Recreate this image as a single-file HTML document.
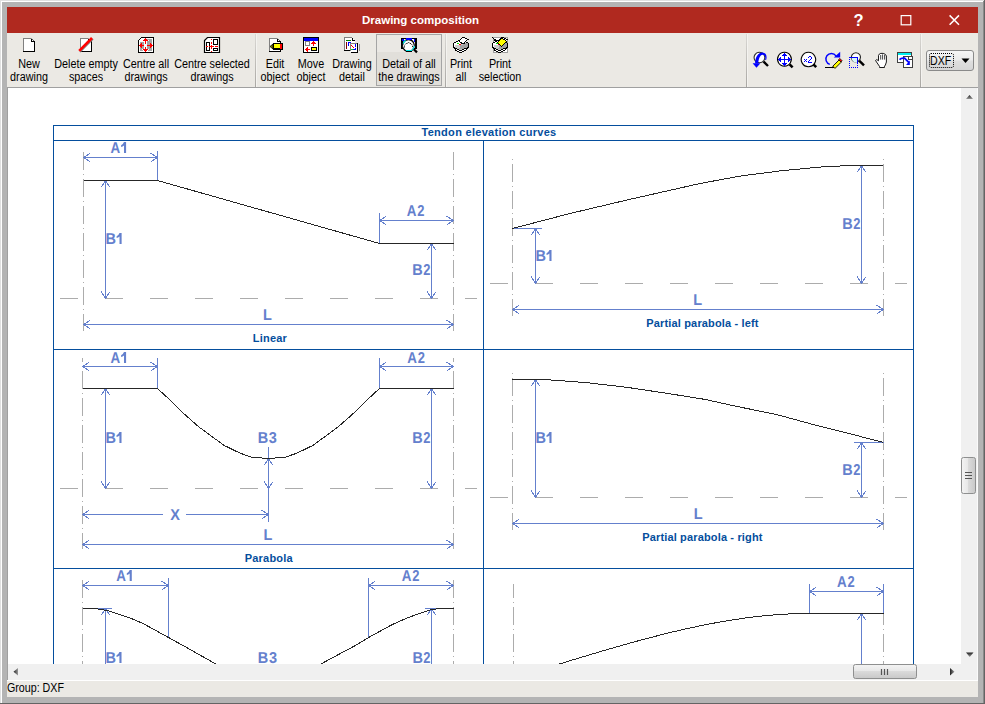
<!DOCTYPE html>
<html><head><meta charset="utf-8">
<style>
*{margin:0;padding:0;box-sizing:border-box}
html,body{width:985px;height:704px;overflow:hidden;background:#b4b4b4;font-family:"Liberation Sans",sans-serif}
.abs{position:absolute}
#frame{position:absolute;left:0;top:0;width:985px;height:704px;background:#b4b4b4}
#title{left:7px;top:7px;width:971px;height:26px;background:#b0291f;color:#fff;font-weight:bold;font-size:11.5px}
#title .t{position:absolute;left:0;width:827px;top:7px;text-align:center}
#toolbar{left:7px;top:33px;width:971px;height:55px;background:#ebe9e4;border-bottom:1px solid #a0a0a0}
.btn{position:absolute;top:0;font-size:11px;letter-spacing:-0.2px;line-height:13px;text-align:center;color:#000}
.btn .lbl{position:absolute;left:0;right:0;top:23px;white-space:nowrap}
.tl{position:absolute;width:120px;text-align:center;font-size:12px;letter-spacing:0px;line-height:13px;white-space:nowrap;color:#000;transform:scaleX(0.9)}
.sep{position:absolute;top:0;width:2px;height:53px;background:linear-gradient(to right,#000 0,#000 1px,#f4f3f0 1px);} .sep::before{content:"";position:absolute;left:0;top:0;width:1px;height:53px;background:linear-gradient(#dad8d4,#a9a7a3)}
#content{left:7px;top:88px;width:954px;height:576px;background:#fff;overflow:hidden}
#vscroll{left:961px;top:88px;width:16px;height:576px;background:#f0f0f0}
#hscroll{left:7px;top:664px;width:954px;height:16px;background:#f0f0f0}
#corner{left:961px;top:664px;width:17px;height:16px;background:#f0f0f0}
#status{left:7px;top:680px;width:971px;height:17px;background:#ebe9e4;border-top:1px solid #fff;font-size:11px}
svg text{font-family:"Liberation Sans",sans-serif}
</style></head><body>
<div id="frame">
 <div class="abs" style="left:0;top:0;width:985px;height:1px;background:#e0e0e0"></div>
 <div class="abs" style="left:0;top:1px;width:984px;height:1px;background:#fff"></div>
 <div class="abs" style="left:0;top:0;width:1px;height:704px;background:#e0e0e0"></div>
 <div class="abs" style="left:1px;top:1px;width:1px;height:702px;background:#fff"></div>
 <div class="abs" style="left:983px;top:1px;width:1px;height:703px;background:#8a8a8a"></div>
 <div class="abs" style="left:984px;top:0;width:1px;height:704px;background:#646464"></div>
 <div class="abs" style="left:0;top:703px;width:985px;height:1px;background:#646464"></div>
</div>
<div id="title" class="abs"><div class="t">Drawing composition</div>
<div class="abs" style="left:846.5px;top:5px;font-size:16.5px;font-weight:bold;line-height:17px">?</div>
<svg class="abs" style="left:893px;top:8px" width="12" height="12"><rect x="1.2" y="0.6" width="9.6" height="9.2" fill="none" stroke="#fff" stroke-width="1.2"/></svg>
<svg class="abs" style="left:941px;top:7px" width="13" height="13"><path d="M1.6 1.4L11 10.8M11 1.4L1.6 10.8" stroke="#fff" stroke-width="1.5"/></svg>
</div>
<div id="toolbar" class="abs"></div>
<div class="abs" style="left:376px;top:34px;width:66px;height:52px;border:1px solid #a5a5a5;background:linear-gradient(#eae8e4 0,#eae8e4 17px,#e1dfda 17px,#e1dfda 100%)"></div>
<div class="sep" style="left:255px;top:34px"></div>
<div class="sep" style="left:445px;top:34px"></div>
<div class="sep" style="left:746px;top:34px"></div>
<div class="sep" style="left:920px;top:34px"></div>
<div class="tl" style="left:-31px;top:58px">New</div><div class="tl" style="left:-31px;top:71px">drawing</div>
<div class="tl" style="left:26px;top:58px">Delete empty</div><div class="tl" style="left:26px;top:71px">spaces</div>
<div class="tl" style="left:85.5px;top:58px">Centre all</div><div class="tl" style="left:85.5px;top:71px">drawings</div>
<div class="tl" style="left:151.5px;top:58px">Centre selected</div><div class="tl" style="left:151.5px;top:71px">drawings</div>
<div class="tl" style="left:215px;top:58px">Edit</div><div class="tl" style="left:215px;top:71px">object</div>
<div class="tl" style="left:251px;top:58px">Move</div><div class="tl" style="left:251px;top:71px">object</div>
<div class="tl" style="left:292px;top:58px">Drawing</div><div class="tl" style="left:292px;top:71px">detail</div>
<div class="tl" style="left:348.5px;top:58px">Detail of all</div><div class="tl" style="left:348.5px;top:71px">the drawings</div>
<div class="tl" style="left:401px;top:58px">Print</div><div class="tl" style="left:401px;top:71px">all</div>
<div class="tl" style="left:439.5px;top:58px">Print</div><div class="tl" style="left:439.5px;top:71px">selection</div>
<svg class="abs" style="left:0;top:0" width="985" height="90" viewBox="0 0 985 90" shape-rendering="crispEdges">
<path d="M24 39H31L34 42V51H24Z" fill="#fff" stroke="none" stroke-width="1" />
<rect x="23" y="38" width="1" height="14" fill="#808080"/>
<rect x="23" y="38" width="8" height="1" fill="#808080"/>
<path d="M31.5 38.5L34.5 41.5" fill="none" stroke="#606060" stroke-width="1" shape-rendering="geometricPrecision"/>
<rect x="34" y="41" width="1" height="11" fill="#000"/>
<rect x="23" y="51" width="12" height="1" fill="#000"/>
<rect x="31" y="39" width="1" height="3" fill="#000"/>
<rect x="31" y="41" width="3" height="1" fill="#000"/>
<path d="M81 39H88L91 42V51H81Z" fill="#fff" stroke="none" stroke-width="1" />
<rect x="80" y="38" width="1" height="14" fill="#808080"/>
<rect x="80" y="38" width="8" height="1" fill="#808080"/>
<path d="M88.5 38.5L91.5 41.5" fill="none" stroke="#606060" stroke-width="1" shape-rendering="geometricPrecision"/>
<rect x="91" y="41" width="1" height="11" fill="#000"/>
<rect x="80" y="51" width="12" height="1" fill="#000"/>
<rect x="88" y="39" width="1" height="3" fill="#000"/>
<rect x="88" y="41" width="3" height="1" fill="#000"/>
<path d="M80 52L93 39" fill="none" stroke="#808080" stroke-width="1.6" shape-rendering="geometricPrecision"/>
<path d="M79.2 50.8L92 38" fill="none" stroke="#ff0000" stroke-width="2.6" shape-rendering="geometricPrecision"/>
<rect x="141" y="37" width="13" height="1" fill="#000"/>
<rect x="140" y="38" width="1" height="1" fill="#000"/>
<rect x="141" y="38" width="4" height="1" fill="#fff"/>
<rect x="145" y="38" width="1" height="1" fill="#ff0000"/>
<rect x="146" y="38" width="7" height="1" fill="#fff"/>
<rect x="153" y="38" width="1" height="1" fill="#000"/>
<rect x="139" y="39" width="1" height="1" fill="#000"/>
<rect x="140" y="39" width="4" height="1" fill="#fff"/>
<rect x="144" y="39" width="3" height="1" fill="#ff0000"/>
<rect x="147" y="39" width="5" height="1" fill="#a4a4a4"/>
<rect x="152" y="39" width="1" height="1" fill="#fff"/>
<rect x="153" y="39" width="1" height="1" fill="#000"/>
<rect x="138" y="40" width="1" height="1" fill="#000"/>
<rect x="139" y="40" width="4" height="1" fill="#fff"/>
<rect x="143" y="40" width="5" height="1" fill="#ff0000"/>
<rect x="148" y="40" width="1" height="1" fill="#fff"/>
<rect x="149" y="40" width="3" height="1" fill="#a4a4a4"/>
<rect x="152" y="40" width="1" height="1" fill="#fff"/>
<rect x="153" y="40" width="1" height="1" fill="#000"/>
<rect x="138" y="41" width="1" height="1" fill="#000"/>
<rect x="139" y="41" width="6" height="1" fill="#fff"/>
<rect x="145" y="41" width="1" height="1" fill="#ff0000"/>
<rect x="146" y="41" width="1" height="1" fill="#fff"/>
<rect x="147" y="41" width="5" height="1" fill="#a4a4a4"/>
<rect x="152" y="41" width="1" height="1" fill="#fff"/>
<rect x="153" y="41" width="1" height="1" fill="#000"/>
<rect x="138" y="42" width="1" height="1" fill="#000"/>
<rect x="139" y="42" width="1" height="1" fill="#fff"/>
<rect x="140" y="42" width="4" height="1" fill="#a4a4a4"/>
<rect x="144" y="42" width="1" height="1" fill="#fff"/>
<rect x="145" y="42" width="1" height="1" fill="#ff0000"/>
<rect x="146" y="42" width="1" height="1" fill="#fff"/>
<rect x="147" y="42" width="5" height="1" fill="#a4a4a4"/>
<rect x="152" y="42" width="1" height="1" fill="#fff"/>
<rect x="153" y="42" width="1" height="1" fill="#000"/>
<rect x="138" y="43" width="1" height="1" fill="#000"/>
<rect x="139" y="43" width="1" height="1" fill="#fff"/>
<rect x="140" y="43" width="1" height="1" fill="#a4a4a4"/>
<rect x="141" y="43" width="1" height="1" fill="#ff0000"/>
<rect x="142" y="43" width="2" height="1" fill="#a4a4a4"/>
<rect x="144" y="43" width="1" height="1" fill="#fff"/>
<rect x="145" y="43" width="1" height="1" fill="#ff0000"/>
<rect x="146" y="43" width="1" height="1" fill="#fff"/>
<rect x="147" y="43" width="3" height="1" fill="#a4a4a4"/>
<rect x="150" y="43" width="1" height="1" fill="#ff0000"/>
<rect x="151" y="43" width="1" height="1" fill="#a4a4a4"/>
<rect x="152" y="43" width="1" height="1" fill="#fff"/>
<rect x="153" y="43" width="1" height="1" fill="#000"/>
<rect x="138" y="44" width="1" height="1" fill="#000"/>
<rect x="139" y="44" width="1" height="1" fill="#fff"/>
<rect x="140" y="44" width="2" height="1" fill="#ff0000"/>
<rect x="142" y="44" width="2" height="1" fill="#a4a4a4"/>
<rect x="144" y="44" width="3" height="1" fill="#fff"/>
<rect x="147" y="44" width="3" height="1" fill="#a4a4a4"/>
<rect x="150" y="44" width="2" height="1" fill="#ff0000"/>
<rect x="152" y="44" width="1" height="1" fill="#fff"/>
<rect x="153" y="44" width="1" height="1" fill="#000"/>
<rect x="138" y="45" width="1" height="1" fill="#000"/>
<rect x="139" y="45" width="5" height="1" fill="#ff0000"/>
<rect x="144" y="45" width="3" height="1" fill="#fff"/>
<rect x="147" y="45" width="6" height="1" fill="#ff0000"/>
<rect x="153" y="45" width="1" height="1" fill="#000"/>
<rect x="138" y="46" width="1" height="1" fill="#000"/>
<rect x="139" y="46" width="1" height="1" fill="#fff"/>
<rect x="140" y="46" width="2" height="1" fill="#ff0000"/>
<rect x="142" y="46" width="2" height="1" fill="#a4a4a4"/>
<rect x="144" y="46" width="3" height="1" fill="#fff"/>
<rect x="147" y="46" width="3" height="1" fill="#a4a4a4"/>
<rect x="150" y="46" width="2" height="1" fill="#ff0000"/>
<rect x="152" y="46" width="1" height="1" fill="#fff"/>
<rect x="153" y="46" width="1" height="1" fill="#000"/>
<rect x="138" y="47" width="1" height="1" fill="#000"/>
<rect x="139" y="47" width="1" height="1" fill="#fff"/>
<rect x="140" y="47" width="1" height="1" fill="#a4a4a4"/>
<rect x="141" y="47" width="1" height="1" fill="#ff0000"/>
<rect x="142" y="47" width="2" height="1" fill="#a4a4a4"/>
<rect x="144" y="47" width="1" height="1" fill="#fff"/>
<rect x="145" y="47" width="1" height="1" fill="#ff0000"/>
<rect x="146" y="47" width="1" height="1" fill="#fff"/>
<rect x="147" y="47" width="3" height="1" fill="#a4a4a4"/>
<rect x="150" y="47" width="1" height="1" fill="#ff0000"/>
<rect x="151" y="47" width="1" height="1" fill="#a4a4a4"/>
<rect x="152" y="47" width="1" height="1" fill="#fff"/>
<rect x="153" y="47" width="1" height="1" fill="#000"/>
<rect x="138" y="48" width="1" height="1" fill="#000"/>
<rect x="139" y="48" width="1" height="1" fill="#fff"/>
<rect x="140" y="48" width="4" height="1" fill="#a4a4a4"/>
<rect x="144" y="48" width="1" height="1" fill="#fff"/>
<rect x="145" y="48" width="1" height="1" fill="#ff0000"/>
<rect x="146" y="48" width="1" height="1" fill="#fff"/>
<rect x="147" y="48" width="5" height="1" fill="#a4a4a4"/>
<rect x="152" y="48" width="1" height="1" fill="#fff"/>
<rect x="153" y="48" width="1" height="1" fill="#000"/>
<rect x="138" y="49" width="1" height="1" fill="#000"/>
<rect x="139" y="49" width="1" height="1" fill="#fff"/>
<rect x="140" y="49" width="2" height="1" fill="#a4a4a4"/>
<rect x="142" y="49" width="1" height="1" fill="#fff"/>
<rect x="143" y="49" width="5" height="1" fill="#ff0000"/>
<rect x="148" y="49" width="1" height="1" fill="#fff"/>
<rect x="149" y="49" width="3" height="1" fill="#a4a4a4"/>
<rect x="152" y="49" width="1" height="1" fill="#fff"/>
<rect x="153" y="49" width="1" height="1" fill="#000"/>
<rect x="138" y="50" width="1" height="1" fill="#000"/>
<rect x="139" y="50" width="1" height="1" fill="#fff"/>
<rect x="140" y="50" width="3" height="1" fill="#a4a4a4"/>
<rect x="143" y="50" width="1" height="1" fill="#fff"/>
<rect x="144" y="50" width="3" height="1" fill="#ff0000"/>
<rect x="147" y="50" width="1" height="1" fill="#fff"/>
<rect x="148" y="50" width="4" height="1" fill="#a4a4a4"/>
<rect x="152" y="50" width="1" height="1" fill="#fff"/>
<rect x="153" y="50" width="1" height="1" fill="#000"/>
<rect x="138" y="51" width="1" height="1" fill="#000"/>
<rect x="139" y="51" width="6" height="1" fill="#fff"/>
<rect x="145" y="51" width="1" height="1" fill="#ff0000"/>
<rect x="146" y="51" width="7" height="1" fill="#fff"/>
<rect x="153" y="51" width="1" height="1" fill="#000"/>
<rect x="138" y="52" width="16" height="1" fill="#000"/>
<path d="M204.5 40.5L207.5 37.5H219.5V52.5H204.5Z" fill="#fff" stroke="#000" stroke-width="1.2" shape-rendering="geometricPrecision"/>
<rect x="206" y="42" width="4" height="1" fill="#000"/>
<rect x="206" y="50" width="4" height="1" fill="#000"/>
<rect x="206" y="42" width="1" height="9" fill="#000"/>
<rect x="209" y="42" width="1" height="9" fill="#000"/>
<rect x="213" y="39" width="5" height="1" fill="#000"/>
<rect x="213" y="44" width="5" height="1" fill="#000"/>
<rect x="213" y="39" width="1" height="6" fill="#000"/>
<rect x="217" y="39" width="1" height="6" fill="#000"/>
<rect x="213" y="48" width="5" height="1" fill="#000"/>
<rect x="213" y="50" width="5" height="1" fill="#000"/>
<rect x="213" y="48" width="1" height="3" fill="#000"/>
<rect x="217" y="48" width="1" height="3" fill="#000"/>
<rect x="211" y="39" width="1" height="1" fill="#ff0000"/>
<rect x="211" y="42" width="1" height="1" fill="#ff0000"/>
<rect x="211" y="43" width="1" height="1" fill="#ff0000"/>
<rect x="211" y="45" width="1" height="1" fill="#ff0000"/>
<rect x="211" y="46" width="1" height="1" fill="#ff0000"/>
<rect x="211" y="47" width="1" height="1" fill="#ff0000"/>
<rect x="211" y="48" width="1" height="1" fill="#ff0000"/>
<rect x="211" y="51" width="1" height="1" fill="#ff0000"/>
<rect x="211" y="45" width="1" height="4" fill="#ff0000"/>
<rect x="206" y="46" width="2" height="1" fill="#ff0000"/>
<rect x="209" y="46" width="5" height="1" fill="#ff0000"/>
<rect x="215" y="46" width="3" height="1" fill="#ff0000"/>
<path d="M270 39H277L280 42V51H270Z" fill="#fff" stroke="none" stroke-width="1" />
<rect x="269" y="38" width="1" height="14" fill="#808080"/>
<rect x="269" y="38" width="8" height="1" fill="#808080"/>
<rect x="277" y="39" width="1" height="3" fill="#000"/>
<rect x="277" y="41" width="3" height="1" fill="#000"/>
<path d="M277.5 38.5L280.5 41.5" fill="none" stroke="#606060" stroke-width="1" shape-rendering="geometricPrecision"/>
<rect x="280" y="41" width="1" height="3" fill="#000"/>
<rect x="269" y="51" width="12" height="1" fill="#000"/>
<rect x="280" y="49" width="1" height="3" fill="#000"/>
<rect x="273" y="43" width="10" height="1" fill="#000"/>
<rect x="273" y="49" width="10" height="1" fill="#000"/>
<rect x="273" y="43" width="1" height="7" fill="#000"/>
<rect x="282" y="43" width="1" height="7" fill="#000"/>
<rect x="274" y="44" width="6" height="4" fill="#ffff00"/>
<rect x="280" y="44" width="2" height="5" fill="#ff0000"/>
<rect x="274" y="48" width="6" height="1" fill="#000"/>
<path d="M273 44L270 46.5L273 49Z" fill="#808000" stroke="#000" stroke-width="0.8" shape-rendering="geometricPrecision"/>
<rect x="303" y="37" width="16" height="1" fill="#000"/>
<rect x="303" y="52" width="16" height="1" fill="#000"/>
<rect x="303" y="37" width="1" height="16" fill="#000"/>
<rect x="318" y="37" width="1" height="16" fill="#000"/>
<rect x="304" y="38" width="14" height="3" fill="#0000ff"/>
<rect x="304" y="41" width="14" height="11" fill="#fff"/>
<rect x="305" y="41" width="5" height="1" fill="#808080"/>
<rect x="305" y="45" width="5" height="1" fill="#808080"/>
<rect x="305" y="41" width="1" height="5" fill="#808080"/>
<rect x="309" y="41" width="1" height="5" fill="#808080"/>
<rect x="313" y="41" width="1" height="5" fill="#ff0000"/>
<rect x="311" y="43" width="5" height="1" fill="#ff0000"/>
<rect x="312" y="42" width="3" height="1" fill="#ff0000"/>
<rect x="305" y="49" width="5" height="1" fill="#ff0000"/>
<rect x="307" y="47" width="1" height="5" fill="#ff0000"/>
<rect x="306" y="48" width="1" height="3" fill="#ff0000"/>
<rect x="311" y="47" width="6" height="4" fill="#000"/>
<rect x="312" y="48" width="4" height="2" fill="#ffff00"/>
<path d="M345 38H352L355 41V51H345Z" fill="#fff" stroke="none" stroke-width="1" />
<rect x="344" y="37" width="1" height="14" fill="#808080"/>
<rect x="344" y="37" width="8" height="1" fill="#808080"/>
<rect x="344" y="50" width="8" height="1" fill="#000"/>
<rect x="352" y="38" width="1" height="3" fill="#000"/>
<rect x="352" y="40" width="3" height="1" fill="#000"/>
<rect x="346" y="40" width="5" height="1" fill="#008000"/>
<rect x="346" y="42" width="1" height="7" fill="#800000"/>
<rect x="348" y="42" width="3" height="1" fill="#0000ff"/>
<rect x="348" y="42" width="1" height="4" fill="#0000ff"/>
<rect x="350" y="43" width="8" height="9" fill="#fff"/>
<rect x="357" y="43" width="1" height="10" fill="#000"/>
<rect x="351" y="52" width="7" height="1" fill="#000"/>
<rect x="350" y="43" width="7" height="1" fill="#808080"/>
<rect x="350" y="44" width="1" height="7" fill="#808080"/>
<rect x="359" y="44" width="1" height="7" fill="#909090"/>
<rect x="351" y="45" width="1" height="1" fill="#ff0000"/>
<rect x="352" y="46" width="1" height="1" fill="#ff0000"/>
<rect x="353" y="47" width="1" height="1" fill="#ff0000"/>
<rect x="355" y="44" width="1" height="3" fill="#0000ff"/>
<rect x="353" y="49" width="3" height="1" fill="#0000ff"/>
<rect x="355" y="48" width="1" height="2" fill="#0000ff"/>
<rect x="351" y="49" width="2" height="1" fill="#00e000"/>
<rect x="401" y="38" width="16" height="1" fill="#000"/>
<rect x="401" y="48" width="16" height="1" fill="#000"/>
<rect x="401" y="38" width="1" height="11" fill="#000"/>
<rect x="416" y="38" width="1" height="11" fill="#000"/>
<rect x="402" y="38" width="1" height="11" fill="#000"/>
<rect x="415" y="38" width="1" height="11" fill="#000"/>
<rect x="403" y="39" width="12" height="9" fill="#fff"/>
<rect x="402" y="39" width="2" height="2" fill="#0000ff"/>
<rect x="414" y="39" width="1" height="3" fill="#0000ff"/>
<path d="M408.5 39.6A5.9 5.9 0 1 1 408.4 39.6Z" fill="#fff" stroke="#000" stroke-width="1.2" shape-rendering="geometricPrecision"/>
<rect x="406" y="38" width="6" height="2" fill="#0000ff"/>
<path d="M403.2 43.6A5.9 5.9 0 0 1 405.6 40.4" fill="none" stroke="#00e8e8" stroke-width="1.3" shape-rendering="geometricPrecision"/>
<path d="M414.3 46A5.9 5.9 0 0 1 412.2 49.9" fill="none" stroke="#00e8e8" stroke-width="1.3" shape-rendering="geometricPrecision"/>
<rect x="406" y="50" width="6" height="1" fill="#00e8e8"/>
<rect x="406" y="51" width="6" height="1" fill="#000"/>
<path d="M404.5 47.5V45.5L406 43.5H407.5L408.5 42L409.5 43.5H411L412.5 45.5V47.5" fill="none" stroke="#000" stroke-width="0.9" stroke-dasharray="1.2 0.8" shape-rendering="geometricPrecision"/>
<path d="M413.8 49.2L417 52.4" fill="none" stroke="#000" stroke-width="2.2" shape-rendering="geometricPrecision"/>
<rect x="462" y="37" width="3" height="1" fill="#000"/>
<rect x="461" y="38" width="1" height="1" fill="#000"/>
<rect x="462" y="38" width="3" height="1" fill="#fff"/>
<rect x="465" y="38" width="2" height="1" fill="#000"/>
<rect x="460" y="39" width="1" height="1" fill="#000"/>
<rect x="461" y="39" width="6" height="1" fill="#fff"/>
<rect x="467" y="39" width="2" height="1" fill="#000"/>
<rect x="458" y="40" width="2" height="1" fill="#000"/>
<rect x="460" y="40" width="6" height="1" fill="#fff"/>
<rect x="466" y="40" width="1" height="1" fill="#000"/>
<rect x="456" y="41" width="2" height="1" fill="#000"/>
<rect x="458" y="41" width="1" height="1" fill="#fff"/>
<rect x="459" y="41" width="1" height="1" fill="#000"/>
<rect x="460" y="41" width="5" height="1" fill="#fff"/>
<rect x="465" y="41" width="1" height="1" fill="#000"/>
<rect x="454" y="42" width="2" height="1" fill="#000"/>
<rect x="456" y="42" width="4" height="1" fill="#fff"/>
<rect x="460" y="42" width="2" height="1" fill="#000"/>
<rect x="462" y="42" width="2" height="1" fill="#fff"/>
<rect x="464" y="42" width="1" height="1" fill="#000"/>
<rect x="466" y="42" width="2" height="1" fill="#000"/>
<rect x="453" y="43" width="1" height="1" fill="#000"/>
<rect x="454" y="43" width="3" height="1" fill="#fff"/>
<rect x="457" y="43" width="2" height="1" fill="#00e000"/>
<rect x="459" y="43" width="2" height="1" fill="#fff"/>
<rect x="461" y="43" width="4" height="1" fill="#000"/>
<rect x="465" y="43" width="3" height="1" fill="#a0a0a0"/>
<rect x="468" y="43" width="1" height="1" fill="#000"/>
<rect x="453" y="44" width="1" height="1" fill="#000"/>
<rect x="454" y="44" width="5" height="1" fill="#fff"/>
<rect x="459" y="44" width="2" height="1" fill="#ff0000"/>
<rect x="461" y="44" width="2" height="1" fill="#cccccc"/>
<rect x="463" y="44" width="5" height="1" fill="#a0a0a0"/>
<rect x="468" y="44" width="1" height="1" fill="#000"/>
<rect x="453" y="45" width="1" height="1" fill="#000"/>
<rect x="454" y="45" width="1" height="1" fill="#fff"/>
<rect x="455" y="45" width="5" height="1" fill="#cccccc"/>
<rect x="460" y="45" width="8" height="1" fill="#a0a0a0"/>
<rect x="468" y="45" width="1" height="1" fill="#000"/>
<rect x="453" y="46" width="1" height="1" fill="#000"/>
<rect x="454" y="46" width="1" height="1" fill="#fff"/>
<rect x="455" y="46" width="5" height="1" fill="#cccccc"/>
<rect x="460" y="46" width="8" height="1" fill="#a0a0a0"/>
<rect x="468" y="46" width="1" height="1" fill="#000"/>
<rect x="453" y="47" width="2" height="1" fill="#000"/>
<rect x="455" y="47" width="5" height="1" fill="#cccccc"/>
<rect x="460" y="47" width="7" height="1" fill="#a0a0a0"/>
<rect x="467" y="47" width="2" height="1" fill="#000"/>
<rect x="454" y="48" width="3" height="1" fill="#000"/>
<rect x="457" y="48" width="2" height="1" fill="#cccccc"/>
<rect x="459" y="48" width="5" height="1" fill="#a0a0a0"/>
<rect x="464" y="48" width="4" height="1" fill="#000"/>
<rect x="455" y="49" width="1" height="1" fill="#000"/>
<rect x="456" y="49" width="1" height="1" fill="#fff"/>
<rect x="457" y="49" width="2" height="1" fill="#000"/>
<rect x="459" y="49" width="3" height="1" fill="#cccccc"/>
<rect x="462" y="49" width="2" height="1" fill="#000"/>
<rect x="464" y="49" width="2" height="1" fill="#fff"/>
<rect x="466" y="49" width="1" height="1" fill="#000"/>
<rect x="455" y="50" width="2" height="1" fill="#000"/>
<rect x="457" y="50" width="2" height="1" fill="#fff"/>
<rect x="459" y="50" width="3" height="1" fill="#000"/>
<rect x="462" y="50" width="2" height="1" fill="#fff"/>
<rect x="464" y="50" width="2" height="1" fill="#000"/>
<rect x="457" y="51" width="2" height="1" fill="#000"/>
<rect x="459" y="51" width="3" height="1" fill="#fff"/>
<rect x="462" y="51" width="2" height="1" fill="#000"/>
<rect x="459" y="52" width="3" height="1" fill="#000"/>
<rect x="493" y="37" width="15" height="16" fill="#fff"/>
<rect x="493" y="37" width="15" height="1" fill="#a0a0a0"/>
<rect x="493" y="52" width="15" height="1" fill="#a0a0a0"/>
<rect x="493" y="37" width="1" height="16" fill="#a0a0a0"/>
<rect x="507" y="37" width="1" height="16" fill="#a0a0a0"/>
<rect x="501" y="37" width="3" height="1" fill="#000"/>
<rect x="500" y="38" width="1" height="1" fill="#000"/>
<rect x="501" y="38" width="3" height="1" fill="#fff"/>
<rect x="504" y="38" width="2" height="1" fill="#000"/>
<rect x="499" y="39" width="1" height="1" fill="#000"/>
<rect x="500" y="39" width="6" height="1" fill="#fff"/>
<rect x="506" y="39" width="2" height="1" fill="#000"/>
<rect x="497" y="40" width="2" height="1" fill="#000"/>
<rect x="499" y="40" width="6" height="1" fill="#fff"/>
<rect x="505" y="40" width="1" height="1" fill="#000"/>
<rect x="495" y="41" width="2" height="1" fill="#000"/>
<rect x="497" y="41" width="1" height="1" fill="#fff"/>
<rect x="498" y="41" width="1" height="1" fill="#000"/>
<rect x="499" y="41" width="5" height="1" fill="#fff"/>
<rect x="504" y="41" width="1" height="1" fill="#000"/>
<rect x="493" y="42" width="2" height="1" fill="#000"/>
<rect x="495" y="42" width="4" height="1" fill="#fff"/>
<rect x="499" y="42" width="2" height="1" fill="#000"/>
<rect x="501" y="42" width="2" height="1" fill="#fff"/>
<rect x="503" y="42" width="1" height="1" fill="#000"/>
<rect x="505" y="42" width="2" height="1" fill="#000"/>
<rect x="492" y="43" width="1" height="1" fill="#000"/>
<rect x="493" y="43" width="3" height="1" fill="#fff"/>
<rect x="496" y="43" width="2" height="1" fill="#00e000"/>
<rect x="498" y="43" width="2" height="1" fill="#fff"/>
<rect x="500" y="43" width="4" height="1" fill="#000"/>
<rect x="504" y="43" width="3" height="1" fill="#a0a0a0"/>
<rect x="507" y="43" width="1" height="1" fill="#000"/>
<rect x="492" y="44" width="1" height="1" fill="#000"/>
<rect x="493" y="44" width="5" height="1" fill="#fff"/>
<rect x="498" y="44" width="2" height="1" fill="#ff0000"/>
<rect x="500" y="44" width="2" height="1" fill="#cccccc"/>
<rect x="502" y="44" width="5" height="1" fill="#a0a0a0"/>
<rect x="507" y="44" width="1" height="1" fill="#000"/>
<rect x="492" y="45" width="1" height="1" fill="#000"/>
<rect x="493" y="45" width="1" height="1" fill="#fff"/>
<rect x="494" y="45" width="5" height="1" fill="#cccccc"/>
<rect x="499" y="45" width="8" height="1" fill="#a0a0a0"/>
<rect x="507" y="45" width="1" height="1" fill="#000"/>
<rect x="492" y="46" width="1" height="1" fill="#000"/>
<rect x="493" y="46" width="1" height="1" fill="#fff"/>
<rect x="494" y="46" width="5" height="1" fill="#cccccc"/>
<rect x="499" y="46" width="8" height="1" fill="#a0a0a0"/>
<rect x="507" y="46" width="1" height="1" fill="#000"/>
<rect x="492" y="47" width="2" height="1" fill="#000"/>
<rect x="494" y="47" width="5" height="1" fill="#cccccc"/>
<rect x="499" y="47" width="7" height="1" fill="#a0a0a0"/>
<rect x="506" y="47" width="2" height="1" fill="#000"/>
<rect x="493" y="48" width="3" height="1" fill="#000"/>
<rect x="496" y="48" width="2" height="1" fill="#cccccc"/>
<rect x="498" y="48" width="5" height="1" fill="#a0a0a0"/>
<rect x="503" y="48" width="4" height="1" fill="#000"/>
<rect x="494" y="49" width="1" height="1" fill="#000"/>
<rect x="495" y="49" width="1" height="1" fill="#fff"/>
<rect x="496" y="49" width="2" height="1" fill="#000"/>
<rect x="498" y="49" width="3" height="1" fill="#cccccc"/>
<rect x="501" y="49" width="2" height="1" fill="#000"/>
<rect x="503" y="49" width="2" height="1" fill="#fff"/>
<rect x="505" y="49" width="1" height="1" fill="#000"/>
<rect x="494" y="50" width="2" height="1" fill="#000"/>
<rect x="496" y="50" width="2" height="1" fill="#fff"/>
<rect x="498" y="50" width="3" height="1" fill="#000"/>
<rect x="501" y="50" width="2" height="1" fill="#fff"/>
<rect x="503" y="50" width="2" height="1" fill="#000"/>
<rect x="496" y="51" width="2" height="1" fill="#000"/>
<rect x="498" y="51" width="3" height="1" fill="#fff"/>
<rect x="501" y="51" width="2" height="1" fill="#000"/>
<rect x="498" y="52" width="3" height="1" fill="#000"/>
<rect x="492" y="37" width="1" height="1" fill="#000"/>
<rect x="493" y="38" width="1" height="1" fill="#000"/>
<rect x="501" y="38" width="2" height="1" fill="#000"/>
<rect x="494" y="39" width="2" height="1" fill="#000"/>
<rect x="500" y="39" width="1" height="1" fill="#000"/>
<rect x="501" y="39" width="2" height="1" fill="#ffff00"/>
<rect x="503" y="39" width="2" height="1" fill="#000"/>
<rect x="494" y="40" width="3" height="1" fill="#000"/>
<rect x="499" y="40" width="1" height="1" fill="#000"/>
<rect x="500" y="40" width="5" height="1" fill="#ffff00"/>
<rect x="505" y="40" width="1" height="1" fill="#000"/>
<rect x="498" y="41" width="1" height="1" fill="#000"/>
<rect x="499" y="41" width="7" height="1" fill="#ffff00"/>
<rect x="506" y="41" width="1" height="1" fill="#000"/>
<rect x="497" y="42" width="1" height="1" fill="#000"/>
<rect x="498" y="42" width="7" height="1" fill="#ffff00"/>
<rect x="505" y="42" width="1" height="1" fill="#000"/>
<rect x="498" y="43" width="1" height="1" fill="#000"/>
<rect x="499" y="43" width="5" height="1" fill="#ffff00"/>
<rect x="504" y="43" width="1" height="1" fill="#000"/>
<rect x="499" y="44" width="1" height="1" fill="#000"/>
<rect x="500" y="44" width="3" height="1" fill="#ffff00"/>
<rect x="503" y="44" width="1" height="1" fill="#000"/>
<rect x="500" y="45" width="1" height="1" fill="#000"/>
<rect x="501" y="45" width="1" height="1" fill="#ffff00"/>
<rect x="502" y="45" width="1" height="1" fill="#000"/>
<rect x="501" y="46" width="1" height="1" fill="#000"/>
<path d="M759.5 52.2A5.3 5.3 0 1 1 759.4 52.2Z" fill="#fff" stroke="#303030" stroke-width="1.1" shape-rendering="geometricPrecision"/>
<path d="M763.6 61.6L768 66" fill="none" stroke="#000" stroke-width="2.4" shape-rendering="geometricPrecision"/>
<path d="M766 60.2C767.5 56 766 52.8 762.5 52.6C758.5 52.4 755.3 56.5 755.1 63.5L758.3 63.5C758.5 58.5 760 55.1 762.5 54.7C764.8 54.4 765.9 57 765.1 59.8Z" fill="#0000ff" stroke="none" stroke-width="1" shape-rendering="geometricPrecision"/>
<path d="M752.6 63.2H760.4L756.5 67.8Z" fill="#0000ff" stroke="none" stroke-width="1" shape-rendering="geometricPrecision"/>
<path d="M784.5 52.3A6.9 6.9 0 1 1 784.4 52.3Z" fill="#fff" stroke="#000" stroke-width="1.1" shape-rendering="geometricPrecision"/>
<path d="M789.6 64.4L792.6 67.4" fill="none" stroke="#000" stroke-width="2.6" shape-rendering="geometricPrecision"/>
<rect x="784" y="54" width="1" height="11" fill="#0000ff"/>
<rect x="779" y="59" width="12" height="1" fill="#0000ff"/>
<rect x="784" y="53" width="1" height="1" fill="#0000ff"/>
<rect x="783" y="54" width="3" height="1" fill="#0000ff"/>
<rect x="782" y="55" width="5" height="1" fill="#0000ff"/>
<rect x="784" y="65" width="1" height="1" fill="#0000ff"/>
<rect x="783" y="64" width="3" height="1" fill="#0000ff"/>
<rect x="782" y="63" width="5" height="1" fill="#0000ff"/>
<rect x="778" y="59" width="1" height="1" fill="#0000ff"/>
<rect x="779" y="58" width="1" height="3" fill="#0000ff"/>
<rect x="780" y="57" width="1" height="5" fill="#0000ff"/>
<rect x="790" y="59" width="1" height="1" fill="#0000ff"/>
<rect x="789" y="58" width="1" height="3" fill="#0000ff"/>
<rect x="788" y="57" width="1" height="5" fill="#0000ff"/>
<path d="M808.5 52.3A7.2 7.2 0 1 1 808.4 52.3Z" fill="#fff" stroke="#000" stroke-width="1.1" shape-rendering="geometricPrecision"/>
<path d="M813.4 64.4L816.2 67.2" fill="none" stroke="#000" stroke-width="2.6" shape-rendering="geometricPrecision"/>
<rect x="804" y="59" width="1" height="1" fill="#0000ff"/>
<rect x="806" y="59" width="1" height="1" fill="#0000ff"/>
<rect x="805" y="60" width="1" height="1" fill="#0000ff"/>
<rect x="804" y="61" width="1" height="1" fill="#0000ff"/>
<rect x="806" y="61" width="1" height="1" fill="#0000ff"/>
<rect x="809" y="56" width="2" height="1" fill="#0000ff"/>
<rect x="808" y="57" width="1" height="1" fill="#0000ff"/>
<rect x="811" y="57" width="1" height="2" fill="#0000ff"/>
<rect x="810" y="59" width="1" height="1" fill="#0000ff"/>
<rect x="809" y="60" width="1" height="1" fill="#0000ff"/>
<rect x="808" y="61" width="1" height="1" fill="#0000ff"/>
<rect x="808" y="62" width="4" height="1" fill="#0000ff"/>
<path d="M836 55.8A5.6 5.6 0 1 0 829.8 64.4" fill="none" stroke="#0000ff" stroke-width="1.4" shape-rendering="geometricPrecision"/>
<path d="M833.8 57.6H840.2V51.8Z" fill="#0000ff" stroke="none" stroke-width="1" shape-rendering="geometricPrecision"/>
<rect x="825" y="67" width="9" height="1" fill="#000"/>
<path d="M832.8 66.2L839 60L841.2 62.2L835 68.4Z" fill="#ffff00" stroke="#000" stroke-width="0.9" shape-rendering="geometricPrecision"/>
<path d="M838.6 59.6L839.8 58.4L842.2 60.8L841 62Z" fill="#ff0000" stroke="#000" stroke-width="0.7" shape-rendering="geometricPrecision"/>
<path d="M832.8 66.2L832 68.2L834.2 67.6Z" fill="#000" stroke="none" stroke-width="1" shape-rendering="geometricPrecision"/>
<path d="M856 52.7A4.6 4.6 0 1 1 855.9 52.7Z" fill="#fff" stroke="#202020" stroke-width="1.1" shape-rendering="geometricPrecision"/>
<path d="M851.6 57.5H857V62.4A4.6 4.6 0 0 1 851.6 57.5Z" fill="#d8f6f6" stroke="none" stroke-width="1" shape-rendering="geometricPrecision"/>
<path d="M859.4 60.8L864 65.4" fill="none" stroke="#000" stroke-width="2.4" shape-rendering="geometricPrecision"/>
<rect x="849" y="57" width="9" height="1" fill="#0000ff"/>
<rect x="857" y="57" width="1" height="7" fill="#0000ff"/>
<rect x="849" y="59" width="1" height="1" fill="#0000ff"/>
<rect x="849" y="61" width="1" height="1" fill="#0000ff"/>
<rect x="849" y="63" width="1" height="1" fill="#0000ff"/>
<rect x="849" y="65" width="1" height="1" fill="#0000ff"/>
<rect x="857" y="65" width="1" height="1" fill="#0000ff"/>
<rect x="849" y="67" width="1" height="1" fill="#0000ff"/>
<rect x="851" y="67" width="1" height="1" fill="#0000ff"/>
<rect x="853" y="67" width="1" height="1" fill="#0000ff"/>
<rect x="855" y="67" width="1" height="1" fill="#0000ff"/>
<rect x="857" y="67" width="1" height="1" fill="#0000ff"/>
<path d="M875.5 60.5L876.8 59.6L878.5 60.8V55.4L879.6 53.8L880.8 53.4H883.2L885.4 54.4L886.4 56V62L885.4 65L884.5 66.2V67.5H879.5V66.4Z" fill="#fff" stroke="#1a1a1a" stroke-width="1" shape-rendering="geometricPrecision"/>
<path d="M880.7 55V59.6M882.6 54.4V59.6M884.6 55V59.6" fill="none" stroke="#303030" stroke-width="0.9" shape-rendering="geometricPrecision"/>
<rect x="897" y="52" width="15" height="1" fill="#404040"/>
<rect x="897" y="62" width="15" height="1" fill="#404040"/>
<rect x="897" y="52" width="1" height="11" fill="#404040"/>
<rect x="911" y="52" width="1" height="11" fill="#404040"/>
<rect x="898" y="53" width="13" height="2" fill="#00f0f0"/>
<rect x="898" y="55" width="13" height="7" fill="#fff"/>
<rect x="903" y="56" width="10" height="12" fill="#fff"/>
<rect x="903" y="56" width="10" height="1" fill="#404040"/>
<rect x="903" y="67" width="10" height="1" fill="#404040"/>
<rect x="903" y="56" width="1" height="12" fill="#404040"/>
<rect x="912" y="56" width="1" height="12" fill="#404040"/>
<rect x="909" y="57" width="3" height="2" fill="#fff"/>
<rect x="908" y="56" width="5" height="1" fill="#404040"/>
<rect x="908" y="59" width="5" height="1" fill="#404040"/>
<rect x="908" y="56" width="1" height="4" fill="#404040"/>
<rect x="912" y="56" width="1" height="4" fill="#404040"/>
<rect x="909" y="57" width="3" height="2" fill="#fff"/>
<path d="M899.5 59.6Q901.5 57.6 904.5 58.2L909 62.6" fill="none" stroke="#0000ff" stroke-width="1.8" shape-rendering="geometricPrecision"/>
<path d="M906 65H909.8V60.6Z" fill="#0000ff" stroke="none" stroke-width="1" shape-rendering="geometricPrecision"/>
</svg>
<div class="abs" style="left:926px;top:50px;width:48px;height:21px;border:1px solid #8a8a8a;border-radius:3px;background:linear-gradient(#f6f6f6 0,#ececec 45%,#dedede 55%,#d6d6d6 100%)"></div>
<svg class="abs" style="left:929px;top:53px" width="26" height="16"><rect x="0.5" y="0.5" width="24" height="14" rx="1.5" fill="none" stroke="#000" stroke-dasharray="1 1"/></svg>
<div class="abs" style="left:930px;top:55px;width:30px;font-size:12px;line-height:13px;color:#000;transform:scaleX(0.88);transform-origin:0 0">DXF</div>
<svg class="abs" style="left:961px;top:58px" width="10" height="6"><path d="M0.5 0.5H8.5L4.5 5Z" fill="#000"/></svg>
<div id="content" class="abs">
<svg width="954" height="576" viewBox="7 88 954 576" shape-rendering="crispEdges">
<rect x="53.5" y="125.5" width="860" height="600" fill="none" stroke="#044e9d"/>
<line x1="53" y1="140.5" x2="914" y2="140.5" stroke="#044e9d" />
<line x1="483.5" y1="140" x2="483.5" y2="701" stroke="#044e9d" />
<line x1="53" y1="349.5" x2="914" y2="349.5" stroke="#044e9d" />
<line x1="53" y1="568.5" x2="914" y2="568.5" stroke="#044e9d" />
<text x="489" y="136" font-size="11" fill="#044e9d" text-anchor="middle" font-weight="bold" letter-spacing="0.3">Tendon elevation curves</text>
<line x1="83.5" y1="152" x2="83.5" y2="331" stroke="#acacac" stroke-dasharray="18 4 1 4" stroke-dashoffset="0"/>
<line x1="453.5" y1="152" x2="453.5" y2="331" stroke="#acacac" stroke-dasharray="18 4 1 4" stroke-dashoffset="0"/>
<line x1="60" y1="298.5" x2="477" y2="298.5" stroke="#acacac" stroke-dasharray="18 27" stroke-dashoffset="0"/>
<line x1="83" y1="157.5" x2="158" y2="157.5" stroke="#6480cd" />
<polyline points="90.3,153.2 83.5,157.5 90.3,161.8" fill="none" stroke="#6480cd"/>
<rect x="84" y="156" width="2" height="3" fill="#6480cd"/>
<polyline points="150.7,153.2 157.5,157.5 150.7,161.8" fill="none" stroke="#6480cd"/>
<rect x="155" y="156" width="2" height="3" fill="#6480cd"/>
<line x1="157.5" y1="151" x2="157.5" y2="181" stroke="#6480cd" />
<line x1="379" y1="220.5" x2="454" y2="220.5" stroke="#6480cd" />
<polyline points="386.3,216.2 379.5,220.5 386.3,224.8" fill="none" stroke="#6480cd"/>
<rect x="380" y="219" width="2" height="3" fill="#6480cd"/>
<polyline points="446.7,216.2 453.5,220.5 446.7,224.8" fill="none" stroke="#6480cd"/>
<rect x="451" y="219" width="2" height="3" fill="#6480cd"/>
<line x1="379.5" y1="213" x2="379.5" y2="243" stroke="#6480cd" />
<line x1="105.5" y1="180" x2="105.5" y2="299" stroke="#6480cd" />
<polyline points="101.2,187.3 105.5,180.5 109.8,187.3" fill="none" stroke="#6480cd"/>
<rect x="104" y="181" width="3" height="2" fill="#6480cd"/>
<polyline points="101.2,291.7 105.5,298.5 109.8,291.7" fill="none" stroke="#6480cd"/>
<rect x="104" y="296" width="3" height="2" fill="#6480cd"/>
<line x1="431.5" y1="243" x2="431.5" y2="299" stroke="#6480cd" />
<polyline points="427.2,250.3 431.5,243.5 435.8,250.3" fill="none" stroke="#6480cd"/>
<rect x="430" y="244" width="3" height="2" fill="#6480cd"/>
<polyline points="427.2,291.7 431.5,298.5 435.8,291.7" fill="none" stroke="#6480cd"/>
<rect x="430" y="296" width="3" height="2" fill="#6480cd"/>
<line x1="83" y1="324.5" x2="454" y2="324.5" stroke="#6480cd" />
<polyline points="90.3,320.2 83.5,324.5 90.3,328.8" fill="none" stroke="#6480cd"/>
<rect x="84" y="323" width="2" height="3" fill="#6480cd"/>
<polyline points="446.7,320.2 453.5,324.5 446.7,328.8" fill="none" stroke="#6480cd"/>
<rect x="451" y="323" width="2" height="3" fill="#6480cd"/>
<polyline points="83.5,180.5 157.5,180.5 379.5,243.5 453.5,243.5" fill="none" stroke="#262626" stroke-width="1" shape-rendering="crispEdges"/>
<text transform="translate(110.58,153) scale(0.85,1)" text-rendering="geometricPrecision" x="0" y="0" font-size="15.75" fill="#6480cd" font-weight="bold">A</text>
<path d="M123.99 142H126.09V153H123.99V145.4Q122.69 146.4 121.09 146.9V145.2Q123.09 144.2 123.99 142Z" fill="#6480cd" shape-rendering="geometricPrecision"/>
<text transform="translate(406.87,216) scale(0.85,1)" text-rendering="geometricPrecision" x="0" y="0" font-size="15.75" fill="#6480cd" font-weight="bold">A</text>
<text transform="translate(417.33,216) scale(0.82,1)" text-rendering="geometricPrecision" x="0" y="0" font-size="15.75" fill="#6480cd" font-weight="bold">2</text>
<text transform="translate(105.61,244) scale(0.92,1)" text-rendering="geometricPrecision" x="0" y="0" font-size="15.75" fill="#6480cd" font-weight="bold">B</text>
<path d="M119.52 233H121.62V244H119.52V236.4Q118.22 237.4 116.62 237.9V236.2Q118.62 235.2 119.52 233Z" fill="#6480cd" shape-rendering="geometricPrecision"/>
<text transform="translate(412.20,275) scale(0.92,1)" text-rendering="geometricPrecision" x="0" y="0" font-size="15.75" fill="#6480cd" font-weight="bold">B</text>
<text transform="translate(423.16,275) scale(0.82,1)" text-rendering="geometricPrecision" x="0" y="0" font-size="15.75" fill="#6480cd" font-weight="bold">2</text>
<text transform="translate(263.01,320) scale(0.92,1)" text-rendering="geometricPrecision" x="0" y="0" font-size="15.75" fill="#6480cd" font-weight="bold">L</text>
<text x="269.9" y="342" font-size="11" fill="#044e9d" text-anchor="middle" font-weight="bold" letter-spacing="0.2">Linear</text>
<line x1="512.5" y1="159" x2="512.5" y2="316" stroke="#acacac" stroke-dasharray="18 4 1 4" stroke-dashoffset="22"/>
<line x1="883.5" y1="159" x2="883.5" y2="316" stroke="#acacac" stroke-dasharray="18 4 1 4" stroke-dashoffset="22"/>
<line x1="490" y1="283.5" x2="907" y2="283.5" stroke="#acacac" stroke-dasharray="18 27" stroke-dashoffset="0"/>
<line x1="512" y1="228.5" x2="542" y2="228.5" stroke="#6480cd" />
<line x1="535.5" y1="228" x2="535.5" y2="284" stroke="#6480cd" />
<polyline points="531.2,235.3 535.5,228.5 539.8,235.3" fill="none" stroke="#6480cd"/>
<rect x="534" y="229" width="3" height="2" fill="#6480cd"/>
<polyline points="531.2,276.7 535.5,283.5 539.8,276.7" fill="none" stroke="#6480cd"/>
<rect x="534" y="281" width="3" height="2" fill="#6480cd"/>
<line x1="861.5" y1="165" x2="861.5" y2="284" stroke="#6480cd" />
<polyline points="857.2,172.3 861.5,165.5 865.8,172.3" fill="none" stroke="#6480cd"/>
<rect x="860" y="166" width="3" height="2" fill="#6480cd"/>
<polyline points="857.2,276.7 861.5,283.5 865.8,276.7" fill="none" stroke="#6480cd"/>
<rect x="860" y="281" width="3" height="2" fill="#6480cd"/>
<line x1="512" y1="309.5" x2="884" y2="309.5" stroke="#6480cd" />
<polyline points="519.3,305.2 512.5,309.5 519.3,313.8" fill="none" stroke="#6480cd"/>
<rect x="513" y="308" width="2" height="3" fill="#6480cd"/>
<polyline points="876.7,305.2 883.5,309.5 876.7,313.8" fill="none" stroke="#6480cd"/>
<rect x="881" y="308" width="2" height="3" fill="#6480cd"/>
<polyline points="512.5,228.5 570.0,213.5 630.0,199.3 700.0,183.5 740.6,176.0 781.0,170.8 822.0,166.9 852.0,165.4 883.5,165.5" fill="none" stroke="#262626" stroke-width="1" shape-rendering="crispEdges"/>
<text transform="translate(535.51,261) scale(0.92,1)" text-rendering="geometricPrecision" x="0" y="0" font-size="15.75" fill="#6480cd" font-weight="bold">B</text>
<path d="M549.42 250H551.52V261H549.42V253.4Q548.12 254.4 546.52 254.9V253.2Q548.52 252.2 549.42 250Z" fill="#6480cd" shape-rendering="geometricPrecision"/>
<text transform="translate(842.20,229) scale(0.92,1)" text-rendering="geometricPrecision" x="0" y="0" font-size="15.75" fill="#6480cd" font-weight="bold">B</text>
<text transform="translate(853.16,229) scale(0.82,1)" text-rendering="geometricPrecision" x="0" y="0" font-size="15.75" fill="#6480cd" font-weight="bold">2</text>
<text transform="translate(693.21,305) scale(0.92,1)" text-rendering="geometricPrecision" x="0" y="0" font-size="15.75" fill="#6480cd" font-weight="bold">L</text>
<text x="702.5" y="327" font-size="11" fill="#044e9d" text-anchor="middle" font-weight="bold" letter-spacing="0.15">Partial parabola - left</text>
<line x1="82.5" y1="358" x2="82.5" y2="549" stroke="#acacac" stroke-dasharray="18 4 1 4" stroke-dashoffset="14"/>
<line x1="453.5" y1="358" x2="453.5" y2="549" stroke="#acacac" stroke-dasharray="18 4 1 4" stroke-dashoffset="14"/>
<line x1="60" y1="488.5" x2="477" y2="488.5" stroke="#acacac" stroke-dasharray="18 27" stroke-dashoffset="0"/>
<line x1="82" y1="366.5" x2="158" y2="366.5" stroke="#6480cd" />
<polyline points="89.3,362.2 82.5,366.5 89.3,370.8" fill="none" stroke="#6480cd"/>
<rect x="83" y="365" width="2" height="3" fill="#6480cd"/>
<polyline points="150.7,362.2 157.5,366.5 150.7,370.8" fill="none" stroke="#6480cd"/>
<rect x="155" y="365" width="2" height="3" fill="#6480cd"/>
<line x1="157.5" y1="358" x2="157.5" y2="389" stroke="#6480cd" />
<line x1="379" y1="366.5" x2="454" y2="366.5" stroke="#6480cd" />
<polyline points="386.3,362.2 379.5,366.5 386.3,370.8" fill="none" stroke="#6480cd"/>
<rect x="380" y="365" width="2" height="3" fill="#6480cd"/>
<polyline points="446.7,362.2 453.5,366.5 446.7,370.8" fill="none" stroke="#6480cd"/>
<rect x="451" y="365" width="2" height="3" fill="#6480cd"/>
<line x1="379.5" y1="358" x2="379.5" y2="389" stroke="#6480cd" />
<line x1="105.5" y1="388" x2="105.5" y2="489" stroke="#6480cd" />
<polyline points="101.2,395.3 105.5,388.5 109.8,395.3" fill="none" stroke="#6480cd"/>
<rect x="104" y="389" width="3" height="2" fill="#6480cd"/>
<polyline points="101.2,481.7 105.5,488.5 109.8,481.7" fill="none" stroke="#6480cd"/>
<rect x="104" y="486" width="3" height="2" fill="#6480cd"/>
<line x1="431.5" y1="388" x2="431.5" y2="489" stroke="#6480cd" />
<polyline points="427.2,395.3 431.5,388.5 435.8,395.3" fill="none" stroke="#6480cd"/>
<rect x="430" y="389" width="3" height="2" fill="#6480cd"/>
<polyline points="427.2,481.7 431.5,488.5 435.8,481.7" fill="none" stroke="#6480cd"/>
<rect x="430" y="486" width="3" height="2" fill="#6480cd"/>
<line x1="268.5" y1="447" x2="268.5" y2="522" stroke="#6480cd" />
<polyline points="264.2,465.3 268.5,458.5 272.8,465.3" fill="none" stroke="#6480cd"/>
<rect x="267" y="459" width="3" height="2" fill="#6480cd"/>
<polyline points="264.2,481.7 268.5,488.5 272.8,481.7" fill="none" stroke="#6480cd"/>
<rect x="267" y="486" width="3" height="2" fill="#6480cd"/>
<line x1="82" y1="514.5" x2="163" y2="514.5" stroke="#6480cd" />
<line x1="186" y1="514.5" x2="269" y2="514.5" stroke="#6480cd" />
<polyline points="89.3,510.2 82.5,514.5 89.3,518.8" fill="none" stroke="#6480cd"/>
<rect x="83" y="513" width="2" height="3" fill="#6480cd"/>
<polyline points="261.7,510.2 268.5,514.5 261.7,518.8" fill="none" stroke="#6480cd"/>
<rect x="266" y="513" width="2" height="3" fill="#6480cd"/>
<line x1="82" y1="544.5" x2="454" y2="544.5" stroke="#6480cd" />
<polyline points="89.3,540.2 82.5,544.5 89.3,548.8" fill="none" stroke="#6480cd"/>
<rect x="83" y="543" width="2" height="3" fill="#6480cd"/>
<polyline points="446.7,540.2 453.5,544.5 446.7,548.8" fill="none" stroke="#6480cd"/>
<rect x="451" y="543" width="2" height="3" fill="#6480cd"/>
<polyline points="82.5,388.5 157.5,388.5 169.8,399.8 181.7,411.7 198.8,426.9 223.9,445.3 239.7,453.0 251.6,457.2 268.5,458.5 285.4,457.2 297.3,453.0 313.1,445.3 338.2,426.9 355.3,411.7 367.2,399.8 379.5,388.5 453.5,388.5" fill="none" stroke="#262626" stroke-width="1" shape-rendering="crispEdges"/>
<text transform="translate(110.58,363) scale(0.85,1)" text-rendering="geometricPrecision" x="0" y="0" font-size="15.75" fill="#6480cd" font-weight="bold">A</text>
<path d="M123.99 352H126.09V363H123.99V355.4Q122.69 356.4 121.09 356.9V355.2Q123.09 354.2 123.99 352Z" fill="#6480cd" shape-rendering="geometricPrecision"/>
<text transform="translate(407.27,363) scale(0.85,1)" text-rendering="geometricPrecision" x="0" y="0" font-size="15.75" fill="#6480cd" font-weight="bold">A</text>
<text transform="translate(417.73,363) scale(0.82,1)" text-rendering="geometricPrecision" x="0" y="0" font-size="15.75" fill="#6480cd" font-weight="bold">2</text>
<text transform="translate(105.51,443) scale(0.92,1)" text-rendering="geometricPrecision" x="0" y="0" font-size="15.75" fill="#6480cd" font-weight="bold">B</text>
<path d="M119.42 432H121.52V443H119.42V435.4Q118.12 436.4 116.52 436.9V435.2Q118.52 434.2 119.42 432Z" fill="#6480cd" shape-rendering="geometricPrecision"/>
<text transform="translate(412.20,443) scale(0.92,1)" text-rendering="geometricPrecision" x="0" y="0" font-size="15.75" fill="#6480cd" font-weight="bold">B</text>
<text transform="translate(423.16,443) scale(0.82,1)" text-rendering="geometricPrecision" x="0" y="0" font-size="15.75" fill="#6480cd" font-weight="bold">2</text>
<text transform="translate(257.71,443) scale(0.92,1)" text-rendering="geometricPrecision" x="0" y="0" font-size="15.75" fill="#6480cd" font-weight="bold">B</text>
<text transform="translate(268.78,443) scale(0.92,1)" text-rendering="geometricPrecision" x="0" y="0" font-size="15.75" fill="#6480cd" font-weight="bold">3</text>
<text transform="translate(170.27,520) scale(0.92,1)" text-rendering="geometricPrecision" x="0" y="0" font-size="15.75" fill="#6480cd" font-weight="bold">X</text>
<text transform="translate(263.51,540) scale(0.92,1)" text-rendering="geometricPrecision" x="0" y="0" font-size="15.75" fill="#6480cd" font-weight="bold">L</text>
<text x="268.8" y="562" font-size="11" fill="#044e9d" text-anchor="middle" font-weight="bold" letter-spacing="0.2">Parabola</text>
<line x1="512.5" y1="373" x2="512.5" y2="530" stroke="#acacac" stroke-dasharray="18 4 1 4" stroke-dashoffset="22"/>
<line x1="883.5" y1="373" x2="883.5" y2="530" stroke="#acacac" stroke-dasharray="18 4 1 4" stroke-dashoffset="22"/>
<line x1="490" y1="497.5" x2="907" y2="497.5" stroke="#acacac" stroke-dasharray="18 27" stroke-dashoffset="0"/>
<line x1="535.5" y1="379" x2="535.5" y2="498" stroke="#6480cd" />
<polyline points="531.2,386.3 535.5,379.5 539.8,386.3" fill="none" stroke="#6480cd"/>
<rect x="534" y="380" width="3" height="2" fill="#6480cd"/>
<polyline points="531.2,490.7 535.5,497.5 539.8,490.7" fill="none" stroke="#6480cd"/>
<rect x="534" y="495" width="3" height="2" fill="#6480cd"/>
<line x1="854" y1="442.5" x2="884" y2="442.5" stroke="#6480cd" />
<line x1="861.5" y1="442" x2="861.5" y2="498" stroke="#6480cd" />
<polyline points="857.2,449.3 861.5,442.5 865.8,449.3" fill="none" stroke="#6480cd"/>
<rect x="860" y="443" width="3" height="2" fill="#6480cd"/>
<polyline points="857.2,490.7 861.5,497.5 865.8,490.7" fill="none" stroke="#6480cd"/>
<rect x="860" y="495" width="3" height="2" fill="#6480cd"/>
<line x1="512" y1="523.5" x2="884" y2="523.5" stroke="#6480cd" />
<polyline points="519.3,519.2 512.5,523.5 519.3,527.8" fill="none" stroke="#6480cd"/>
<rect x="513" y="522" width="2" height="3" fill="#6480cd"/>
<polyline points="876.7,519.2 883.5,523.5 876.7,527.8" fill="none" stroke="#6480cd"/>
<rect x="881" y="522" width="2" height="3" fill="#6480cd"/>
<polyline points="512.5,379.5 545.6,379.6 586.2,382.6 626.8,387.3 667.4,393.4 705.0,399.4 735.6,406.2 776.2,414.4 816.8,425.5 857.4,435.7 883.5,442.5" fill="none" stroke="#262626" stroke-width="1" shape-rendering="crispEdges"/>
<text transform="translate(535.51,443) scale(0.92,1)" text-rendering="geometricPrecision" x="0" y="0" font-size="15.75" fill="#6480cd" font-weight="bold">B</text>
<path d="M549.42 432H551.52V443H549.42V435.4Q548.12 436.4 546.52 436.9V435.2Q548.52 434.2 549.42 432Z" fill="#6480cd" shape-rendering="geometricPrecision"/>
<text transform="translate(842.20,475) scale(0.92,1)" text-rendering="geometricPrecision" x="0" y="0" font-size="15.75" fill="#6480cd" font-weight="bold">B</text>
<text transform="translate(853.16,475) scale(0.82,1)" text-rendering="geometricPrecision" x="0" y="0" font-size="15.75" fill="#6480cd" font-weight="bold">2</text>
<text transform="translate(693.71,519) scale(0.92,1)" text-rendering="geometricPrecision" x="0" y="0" font-size="15.75" fill="#6480cd" font-weight="bold">L</text>
<text x="702.4" y="541" font-size="11" fill="#044e9d" text-anchor="middle" font-weight="bold" letter-spacing="0.15">Partial parabola - right</text>
<line x1="82.5" y1="580" x2="82.5" y2="665" stroke="#acacac" stroke-dasharray="18 4 1 4" stroke-dashoffset="0"/>
<line x1="453.5" y1="580" x2="453.5" y2="665" stroke="#acacac" stroke-dasharray="18 4 1 4" stroke-dashoffset="0"/>
<line x1="82" y1="585.5" x2="169" y2="585.5" stroke="#6480cd" />
<polyline points="89.3,581.2 82.5,585.5 89.3,589.8" fill="none" stroke="#6480cd"/>
<rect x="83" y="584" width="2" height="3" fill="#6480cd"/>
<polyline points="161.7,581.2 168.5,585.5 161.7,589.8" fill="none" stroke="#6480cd"/>
<rect x="166" y="584" width="2" height="3" fill="#6480cd"/>
<line x1="168.5" y1="578" x2="168.5" y2="638" stroke="#6480cd" />
<line x1="368" y1="585.5" x2="454" y2="585.5" stroke="#6480cd" />
<polyline points="375.3,581.2 368.5,585.5 375.3,589.8" fill="none" stroke="#6480cd"/>
<rect x="369" y="584" width="2" height="3" fill="#6480cd"/>
<polyline points="446.7,581.2 453.5,585.5 446.7,589.8" fill="none" stroke="#6480cd"/>
<rect x="451" y="584" width="2" height="3" fill="#6480cd"/>
<line x1="368.5" y1="578" x2="368.5" y2="638" stroke="#6480cd" />
<line x1="94" y1="608.5" x2="112" y2="608.5" stroke="#6480cd" />
<line x1="105.5" y1="608" x2="105.5" y2="701" stroke="#6480cd" />
<polyline points="101.2,615.3 105.5,608.5 109.8,615.3" fill="none" stroke="#6480cd"/>
<rect x="104" y="609" width="3" height="2" fill="#6480cd"/>
<polyline points="101.2,693.7 105.5,700.5 109.8,693.7" fill="none" stroke="#6480cd"/>
<rect x="104" y="698" width="3" height="2" fill="#6480cd"/>
<line x1="425" y1="608.5" x2="454" y2="608.5" stroke="#6480cd" />
<line x1="431.5" y1="608" x2="431.5" y2="701" stroke="#6480cd" />
<polyline points="427.2,615.3 431.5,608.5 435.8,615.3" fill="none" stroke="#6480cd"/>
<rect x="430" y="609" width="3" height="2" fill="#6480cd"/>
<polyline points="427.2,693.7 431.5,700.5 435.8,693.7" fill="none" stroke="#6480cd"/>
<rect x="430" y="698" width="3" height="2" fill="#6480cd"/>
<polyline points="82.5,608.5 95.3,608.5 107.5,610.6 117.2,613.8 131.9,618.7 143.2,623.6 168.5,637.5 188.7,648.7 213.1,662.5 240.0,677.5" fill="none" stroke="#262626" stroke-width="1" shape-rendering="crispEdges"/>
<polyline points="300.0,675.0 323.6,662.5 356.9,644.7 368.5,637.5 392.6,624.4 407.2,617.9 418.6,613.8 431.6,609.6 440.5,608.5 453.5,608.5" fill="none" stroke="#262626" stroke-width="1" shape-rendering="crispEdges"/>
<text transform="translate(116.28,581) scale(0.85,1)" text-rendering="geometricPrecision" x="0" y="0" font-size="15.75" fill="#6480cd" font-weight="bold">A</text>
<path d="M129.69 570H131.79V581H129.69V573.4Q128.39 574.4 126.79 574.9V573.2Q128.79 572.2 129.69 570Z" fill="#6480cd" shape-rendering="geometricPrecision"/>
<text transform="translate(401.87,581) scale(0.85,1)" text-rendering="geometricPrecision" x="0" y="0" font-size="15.75" fill="#6480cd" font-weight="bold">A</text>
<text transform="translate(412.33,581) scale(0.82,1)" text-rendering="geometricPrecision" x="0" y="0" font-size="15.75" fill="#6480cd" font-weight="bold">2</text>
<text transform="translate(105.51,663) scale(0.92,1)" text-rendering="geometricPrecision" x="0" y="0" font-size="15.75" fill="#6480cd" font-weight="bold">B</text>
<path d="M119.42 652H121.52V663H119.42V655.4Q118.12 656.4 116.52 656.9V655.2Q118.52 654.2 119.42 652Z" fill="#6480cd" shape-rendering="geometricPrecision"/>
<text transform="translate(412.40,663) scale(0.92,1)" text-rendering="geometricPrecision" x="0" y="0" font-size="15.75" fill="#6480cd" font-weight="bold">B</text>
<text transform="translate(423.36,663) scale(0.82,1)" text-rendering="geometricPrecision" x="0" y="0" font-size="15.75" fill="#6480cd" font-weight="bold">2</text>
<text transform="translate(257.81,663) scale(0.92,1)" text-rendering="geometricPrecision" x="0" y="0" font-size="15.75" fill="#6480cd" font-weight="bold">B</text>
<text transform="translate(268.88,663) scale(0.92,1)" text-rendering="geometricPrecision" x="0" y="0" font-size="15.75" fill="#6480cd" font-weight="bold">3</text>
<line x1="513.5" y1="584" x2="513.5" y2="665" stroke="#acacac" stroke-dasharray="18 4 1 4" stroke-dashoffset="4"/>
<line x1="883.5" y1="584" x2="883.5" y2="665" stroke="#acacac" stroke-dasharray="18 4 1 4" stroke-dashoffset="4"/>
<line x1="883.5" y1="584" x2="883.5" y2="614" stroke="#6480cd" />
<line x1="809" y1="591.5" x2="884" y2="591.5" stroke="#6480cd" />
<polyline points="816.3,587.2 809.5,591.5 816.3,595.8" fill="none" stroke="#6480cd"/>
<rect x="810" y="590" width="2" height="3" fill="#6480cd"/>
<polyline points="876.7,587.2 883.5,591.5 876.7,595.8" fill="none" stroke="#6480cd"/>
<rect x="881" y="590" width="2" height="3" fill="#6480cd"/>
<line x1="809.5" y1="584" x2="809.5" y2="614" stroke="#6480cd" />
<line x1="861.5" y1="613" x2="861.5" y2="701" stroke="#6480cd" />
<polyline points="857.2,620.3 861.5,613.5 865.8,620.3" fill="none" stroke="#6480cd"/>
<rect x="860" y="614" width="3" height="2" fill="#6480cd"/>
<polyline points="857.2,693.7 861.5,700.5 865.8,693.7" fill="none" stroke="#6480cd"/>
<rect x="860" y="698" width="3" height="2" fill="#6480cd"/>
<polyline points="540.0,669.9 552.0,666.2 564.0,662.6 576.0,658.9 588.0,655.3 600.0,651.7 612.0,648.2 624.0,644.8 636.0,641.4 648.0,638.2 660.0,635.1 672.0,632.1 684.0,629.3 696.0,626.7 708.0,624.2 720.0,622.0 732.0,620.0 744.0,618.2 756.0,616.6 768.0,615.4 780.0,614.4 792.0,613.8 804.0,613.5 883.5,613.5" fill="none" stroke="#262626" stroke-width="1" shape-rendering="crispEdges"/>
<text transform="translate(836.97,587) scale(0.85,1)" text-rendering="geometricPrecision" x="0" y="0" font-size="15.75" fill="#6480cd" font-weight="bold">A</text>
<text transform="translate(847.43,587) scale(0.82,1)" text-rendering="geometricPrecision" x="0" y="0" font-size="15.75" fill="#6480cd" font-weight="bold">2</text>
</svg>
</div>
<div id="vscroll" class="abs"></div>
<div id="hscroll" class="abs"></div>
<div id="corner" class="abs"></div>
<div class="abs" style="left:977px;top:88px;width:1px;height:592px;background:#fafafa"></div>
<div class="abs" style="left:7px;top:87px;width:1px;height:593px;background:#a0a0a0"></div>
<svg class="abs" style="left:0;top:0" width="985" height="704" viewBox="0 0 985 704">
<defs>
<linearGradient id="ag" x1="0" y1="0" x2="0" y2="1"><stop offset="0" stop-color="#202020"/><stop offset="1" stop-color="#9a9a9a"/></linearGradient>
<linearGradient id="agd" x1="0" y1="0" x2="0" y2="1"><stop offset="0" stop-color="#9a9a9a"/><stop offset="1" stop-color="#202020"/></linearGradient>
<linearGradient id="agr" x1="0" y1="0" x2="1" y2="0"><stop offset="0" stop-color="#202020"/><stop offset="1" stop-color="#9a9a9a"/></linearGradient>
<linearGradient id="agl" x1="0" y1="0" x2="1" y2="0"><stop offset="0" stop-color="#9a9a9a"/><stop offset="1" stop-color="#202020"/></linearGradient>
<linearGradient id="vth" x1="0" y1="0" x2="1" y2="0"><stop offset="0" stop-color="#f4f4f4"/><stop offset="0.45" stop-color="#e8e8e8"/><stop offset="0.5" stop-color="#dadada"/><stop offset="1" stop-color="#c8c8c8"/></linearGradient>
<linearGradient id="hth" x1="0" y1="0" x2="0" y2="1"><stop offset="0" stop-color="#f4f4f4"/><stop offset="0.45" stop-color="#e8e8e8"/><stop offset="0.5" stop-color="#dadada"/><stop offset="1" stop-color="#c8c8c8"/></linearGradient>
</defs>
<path d="M966 99H973L969.5 95Z" fill="url(#ag)"/>
<path d="M966 652.5H973.5L969.7 657Z" fill="url(#ag)"/>
<path d="M18 668V675.5L13.5 671.7Z" fill="url(#agr)"/>
<path d="M950 668V675.5L954.5 671.7Z" fill="url(#agr)"/>
<rect x="961.5" y="457.5" width="14" height="36" rx="2" fill="url(#vth)" stroke="#8e8f8f"/>
<path d="M965 472.5H972M965 475.5H972M965 478.5H972" stroke="#555" stroke-width="1.2"/>
<rect x="853.5" y="664.5" width="63" height="14" rx="2" fill="url(#hth)" stroke="#8e8f8f"/>
<path d="M881.5 669V675M884.5 669V675M887.5 669V675" stroke="#555" stroke-width="1.2"/>
</svg>
<div id="status" class="abs"><div style="position:absolute;left:0;top:0px;font-size:12px;line-height:14px;transform:scaleX(0.89);transform-origin:0 0;white-space:nowrap">Group: DXF</div></div>
</body></html>
